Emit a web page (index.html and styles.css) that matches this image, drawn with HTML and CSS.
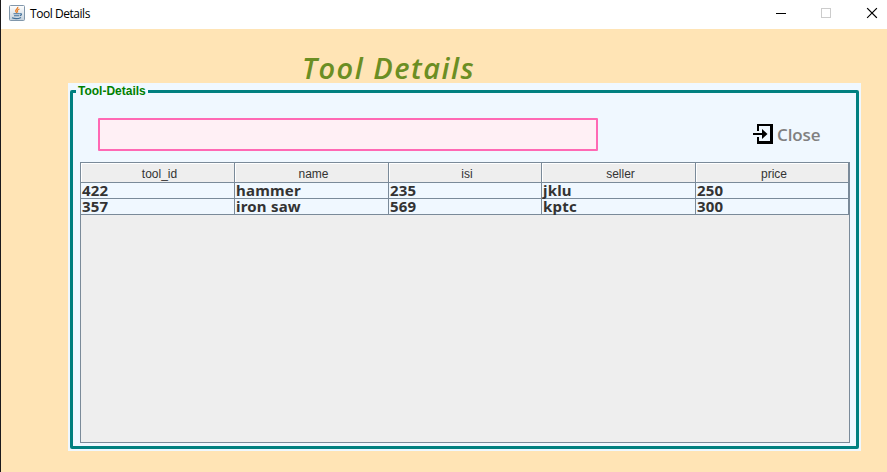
FILE: index.html
```html
<!DOCTYPE html>
<html lang="en">
<head>
<meta charset="utf-8">
<title>Tool Details</title>
<link rel="stylesheet" href="styles.css">
</head>
<body>
<div class="window">
  <header class="titlebar">
    <svg class="app-icon" viewBox="0 0 16 16">
      <defs><linearGradient id="g" x1="0" y1="0" x2="0" y2="1"><stop offset="0" stop-color="#fff"/><stop offset="1" stop-color="#c3d0dc"/></linearGradient></defs>
      <rect x=".5" y=".5" width="15" height="15" rx="1" fill="url(#g)" stroke="#8197ab"/>
      <path d="M8.8 1.8C9.2 4 5.8 4.5 6.8 6.5L7.8 8M10.5 4C7.5 5.2 8.2 6 8.7 7.4" fill="none" stroke="#e8822d" stroke-width="1.3"/>
      <path d="M4.5 8.8h6.3M5 10.7h5M3 12.8c2.5 1 6.500 1 9-.4M11 8.800c2.200-.5 1.800 1.600-.3 2" fill="none" stroke="#416f99" stroke-width="1.1"/>
    </svg>
    <span class="caption">Tool Details</span>
    <svg class="controls" viewBox="0 0 110 29" shape-rendering="crispEdges">
      <path d="M3 13.500h10" stroke="#000"/>
      <rect x="48.500" y="8.500" width="9" height="9" fill="none" stroke="#ccc"/>
      <path d="M94.500 8.500l9 9M103.500 8.500l-9 9" stroke="#000" stroke-width="1.100" shape-rendering="auto" stroke-linecap="square"/>
    </svg>
  </header>
  <main class="content">
    <h1 class="heading">Tool Details</h1>
    <fieldset class="panel">
      <legend class="legend">Tool-Details</legend>
      <div class="toolbar">
        <input class="search" type="text" aria-label="Search">
        <button class="close" type="button">
          <svg class="close-icon" viewBox="0 0 20 20">
            <path d="M5 7V1h13.500v17.500H5V13" fill="none" stroke="#000" stroke-width="2"/>
            <path d="M18.500 0v20M4 18.500h16" stroke="#000" stroke-width="3"/>
            <path d="M0 10h11" stroke="#000" stroke-width="2"/>
            <path d="M9 5l5.500 5L9 15z"/>
          </svg>
          <span class="close-text">Close</span>
        </button>
      </div>
      <div class="scroll">
        <table class="grid">
          <colgroup><col class="wide"><col class="wide"><col class="slim"><col class="wide"><col class="slim"></colgroup>
          <thead><tr><th>tool_id</th><th>name</th><th>isi</th><th>seller</th><th>price</th></tr></thead>
          <tbody>
            <tr><td>422</td><td>hammer</td><td>235</td><td>jklu</td><td>250</td></tr>
            <tr><td>357</td><td>iron saw</td><td>569</td><td>kptc</td><td>300</td></tr>
          </tbody>
        </table>
      </div>
    </fieldset>
  </main>
</div>
</body>
</html>
```
FILE: styles.css
```css
*, *::before { box-sizing: border-box; }
body { margin: 0; overflow: hidden; }
.window {
  width: 887px;
  height: 472px;
  border-left: 1px solid #1b191b;
  background: #ffe4b5;
}
.titlebar {
  display: flex;
  align-items: center;
  height: 29px;
  padding: 0 4px 0 8px;
  background: #fff;
}
.app-icon { width: 16px; height: 16px; margin-top: -3px; }
.caption {
  margin: -1px 0 0 5px;
  font: 12px/16px "Open Sans", sans-serif;
  letter-spacing: -0.45px;
  color: #000;
}
.controls { width: 110px; height: 29px; margin-left: auto; }
.content { padding: 22px 26px 0 67px; }
.heading {
  height: 32px;
  margin: 0 0 0 234px;
  font: italic 600 29px/33px "Trebuchet MS", "Open Sans", sans-serif;
  letter-spacing: 1.5px;
  white-space: nowrap;
  color: #6b8e23;
}
.panel {
  display: flow-root;
  width: 793px;
  height: 368px;
  margin: 0;
  padding: 7px 2px 2px;
  border: 0;
  background: #f0f8ff;
}
.panel::before {
  content: "";
  display: block;
  height: 359px;
  margin-bottom: -359px;
  border: 3px solid #008080;
  border-radius: 2px;
}
.legend {
  float: left;
  margin: -7px 0 -10px 6px;
  padding: 0 2px;
  font: bold 12px/17px "Liberation Sans", sans-serif;
  background: #f0f8ff;
  color: #008000;
}
.toolbar {
  clear: both;
  display: flex;
  align-items: center;
  height: 33px;
  margin: 28px 38px 0 28px;
  position: relative;
}
.search {
  width: 500px;
  height: 33px;
  border: 2px solid #ff69b4;
  border-radius: 1px;
  background: #fff0f5;
}
.close {
  display: flex;
  align-items: center;
  gap: 4px;
  margin-left: 155px;
  padding: 0;
  border: 0;
  background: none;
}
.close-icon { width: 20px; height: 20px; margin-top: -2px; }
.close-text {
  font: 600 17px/20px "Trebuchet MS", "Open Sans", sans-serif;
  letter-spacing: -0.1px;
  color: #808080;
}
.scroll {
  position: relative;
  width: 770px;
  height: 281px;
  margin: 11px 0 0 10px;
  border: 1px solid #7a8a99;
  background: #eee;
}
.grid {
  width: 768px;
  table-layout: fixed;
  border-collapse: separate;
  border-spacing: 0;
}
.wide { width: 154px; }
.slim { width: 153px; }
.grid th {
  height: 20px;
  padding: 2px 0 0 4px;
  border-right: 1px solid #7a8a99;
  border-bottom: 1px solid #7a8a99;
  box-shadow: inset 1px 1px #fff;
  font: 12px/16px "Liberation Sans", sans-serif;
  color: #333;
}
.grid td {
  height: 16px;
  padding: 0 0 0 1px;
  border-right: 1px solid #7a8a99;
  border-bottom: 1px solid #7a8a99;
  background: #f0f8ff;
  font: bold 15px/15px "Trebuchet MS", "Noto Sans", sans-serif;
  letter-spacing: 0.2px;
  color: #333;
}
```
